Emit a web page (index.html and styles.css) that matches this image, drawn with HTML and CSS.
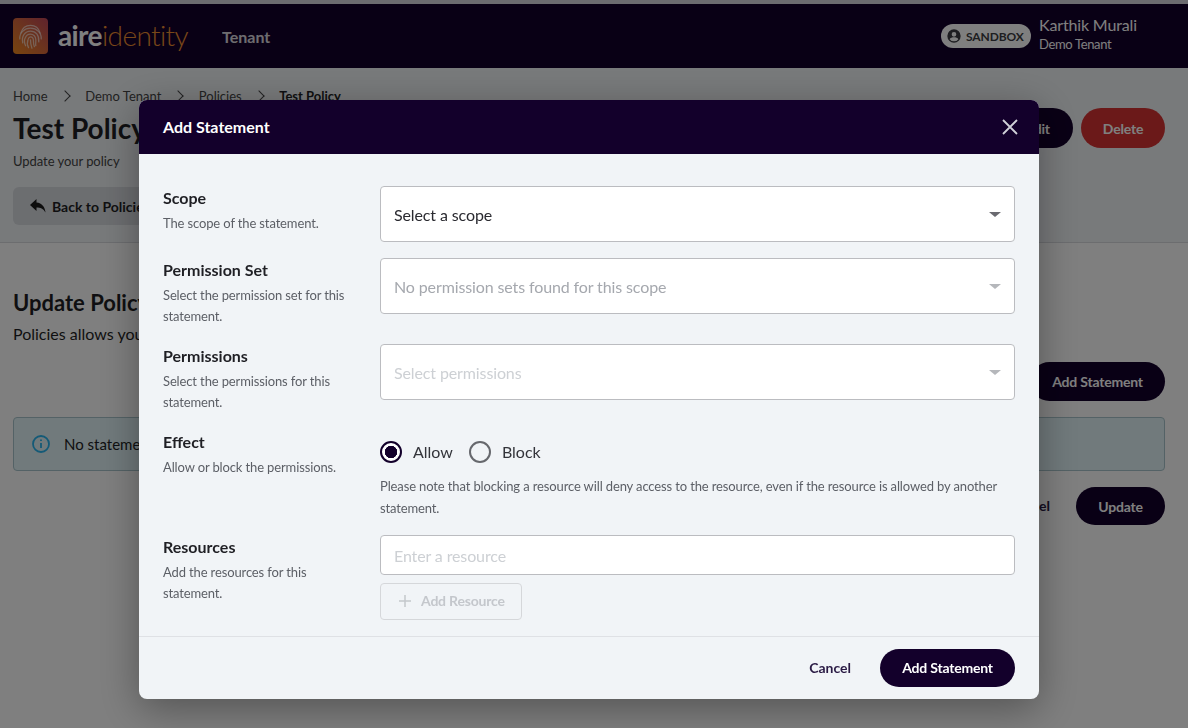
FILE: index.html
```html
<!DOCTYPE html>
<html lang="en">
<head>
    <meta charset="UTF-8">
    <title>Test Policy</title>
    <link rel="stylesheet" href="styles.css">
</head>
<body>
    <div class="top-strip"></div>
    <header class="app-header">
        <div class="logo">
            <span class="logo-mark">
                <svg width="36" height="36" viewBox="0 0 36 36" fill="none" stroke="#fff" stroke-opacity="0.6" stroke-width="1.3" stroke-linecap="round">
                    <path d="M8 15c1.500-5 5.500-8 10-8s8.500 3 10 8"/>
                    <path d="M7 21c-.5-6 4.500-11 11-11s11.500 5 11 11"/>
                    <path d="M10 25c-1.500-7 2.500-12 8-12s9 4 8.500 11"/>
                    <path d="M13 28c-1.500-3-1.500-6-.5-8 1-2.500 3-4 5.500-4s5.500 2 5.500 6-.5 4.500 0 6"/>
                    <path d="M16 30c-1.500-3-1.500-6-.5-8.500.5-1.500 1.500-2.500 2.500-2.500 2 0 3 1.500 3 4s0 4 1 6"/>
                    <path d="M18 22c0 3 .5 6 1.500 8.500"/>
                </svg>
            </span>
            <span class="logo-text"><b>aire</b>identity</span>
        </div>
        <nav class="top-nav">Tenant</nav>
        <div class="header-right">
            <span class="env-pill">
                <svg width="16" height="16" viewBox="0 0 24 24" fill="#3c3c42"><path d="M12 2a10 10 0 1 0 0 20 10 10 0 0 0 0-20zm0 4a3.500 3.500 0 1 1 0 7 3.500 3.500 0 0 1 0-7zm0 14a8 8 0 0 1-6.500-3.300c.8-1.700 4-2.700 6.500-2.700s5.700 1 6.500 2.700A8 8 0 0 1 12 20z"/></svg>
                SANDBOX
            </span>
            <div class="user-info">
                <div class="user-name">Karthik Murali</div>
                <div class="user-tenant">Demo Tenant</div>
            </div>
        </div>
    </header>

    <section class="page-head">
        <div class="breadcrumbs">
            <span>Home</span><i class="crumb-sep"></i>
            <span>Demo Tenant</span><i class="crumb-sep"></i>
            <span>Policies</span><i class="crumb-sep"></i>
            <strong>Test Policy</strong>
        </div>
        <div class="title-row">
            <div>
                <h1>Test Policy</h1>
                <p class="subtitle">Update your policy</p>
            </div>
            <div class="title-actions">
                <button class="btn btn-dark btn-edit">Edit</button>
                <button class="btn btn-red">Delete</button>
            </div>
        </div>
        <button class="btn-back">
            <svg width="18" height="16" viewBox="0 0 18 16" fill="#1a1a1a"><path d="M7.500 1 1 7l6.500 6V9.500c4 0 6.800 1 9 5-.5-5.500-3.500-9.500-9-10z"/></svg>
            Back to Policies
        </button>
    </section>

    <main class="page-body">
        <h2>Update Policy</h2>
        <p class="lead">Policies allows you to manage access to resources.</p>
        <div class="statement-bar">
            <button class="btn btn-dark">Add Statement</button>
        </div>
        <div class="alert">
            <svg width="20" height="20" viewBox="0 0 20 20" fill="none" stroke="#28b4ee" stroke-width="1.800"><circle cx="10" cy="10" r="8"/><path d="M10 9v5M10 5.500v1.500"/></svg>
            No statements have been added yet.
        </div>
        <div class="form-actions">
            <button class="btn-link">Cancel</button>
            <button class="btn btn-dark">Update</button>
        </div>
    </main>

    <div class="overlay">
        <div class="modal">
            <div class="modal-header">
                <span>Add Statement</span>
                <svg class="modal-close" width="16" height="16" viewBox="0 0 16 16" stroke="#d0d0d8" stroke-width="1.800"><path d="M1 1l14 14M15 1 1 15"/></svg>
            </div>
            <div class="modal-body">
                <div class="form-row">
                    <div class="field-label">
                        <h3>Scope</h3>
                        <p>The scope of the statement.</p>
                    </div>
                    <div class="select">
                        <span>Select a scope</span>
                        <i class="caret"></i>
                    </div>
                </div>
                <div class="form-row">
                    <div class="field-label">
                        <h3>Permission Set</h3>
                        <p>Select the permission set for this statement.</p>
                    </div>
                    <div class="select is-empty">
                        <span>No permission sets found for this scope</span>
                        <i class="caret"></i>
                    </div>
                </div>
                <div class="form-row">
                    <div class="field-label">
                        <h3>Permissions</h3>
                        <p>Select the permissions for this statement.</p>
                    </div>
                    <div class="select is-disabled">
                        <span>Select permissions</span>
                        <i class="caret"></i>
                    </div>
                </div>
                <div class="form-row">
                    <div class="field-label">
                        <h3>Effect</h3>
                        <p>Allow or block the permissions.</p>
                    </div>
                    <div>
                        <div class="radio-group">
                            <span class="radio is-checked"></span><span class="radio-text">Allow</span>
                            <span class="radio"></span><span class="radio-text">Block</span>
                        </div>
                        <p class="note">Please note that blocking a resource will deny access to the resource, even if the resource is allowed by another statement.</p>
                    </div>
                </div>
                <div class="form-row">
                    <div class="field-label">
                        <h3>Resources</h3>
                        <p>Add the resources for this statement.</p>
                    </div>
                    <div>
                        <input class="text-input" type="text" placeholder="Enter a resource">
                        <button class="btn-add" disabled>
                            <svg width="12" height="12" viewBox="0 0 12 12" stroke="#c4c7cc" stroke-width="1.500"><path d="M6 0v12M0 6h12"/></svg>
                            Add Resource
                        </button>
                    </div>
                </div>
            </div>
            <div class="modal-footer">
                <button class="btn-link">Cancel</button>
                <button class="btn btn-primary">Add Statement</button>
            </div>
        </div>
    </div>
</body>
</html>
```

FILE: styles.css
```css
* {
    box-sizing: border-box;
}

html, body {
    height: 100%;
}

body {
    margin: 0;
    font-family: 'Lato', sans-serif;
    color: #1f1f24;
    background: #fff;
    overflow: hidden;
}

button {
    font-family: inherit;
}

.top-strip {
    height: 4px;
    background: #d8d8e0;
}

/* header */
.app-header {
    height: 64px;
    padding: 0 24px 0 13px;
    display: flex;
    align-items: center;
    background: #13002b;
}

.logo {
    display: flex;
    align-items: center;
    gap: 10px;
}

.logo-mark {
    width: 35px;
    height: 36px;
    border-radius: 4px;
    background: linear-gradient(45deg, #f08a1e, #c0465a);
    display: flex;
}

.logo-text {
    padding-bottom: 3px;
    font-size: 28px;
    font-weight: 300;
    letter-spacing: -0.6px;
    color: #f09030;
}

.logo-text b {
    font-weight: 700;
    color: #fff;
}

.top-nav {
    margin-left: 34px;
    font-size: 16px;
    font-weight: 700;
    color: #fff;
    opacity: 0.85;
}

.header-right {
    margin-left: auto;
    display: flex;
    align-items: center;
    gap: 8px;
}

.env-pill {
    width: 90px;
    height: 24px;
    padding-left: 5px;
    border-radius: 12px;
    background: #fff;
    color: #3c3c42;
    font-size: 12px;
    font-weight: 700;
    letter-spacing: -0.1px;
    display: flex;
    align-items: center;
    gap: 4px;
}

.user-info {
    width: 125px;
    margin-top: -4px;
    color: #fff;
}

.user-name {
    font-size: 16px;
    line-height: 20px;
    letter-spacing: -0.15px;
}

.user-tenant {
    font-size: 13px;
    line-height: 18px;
    letter-spacing: -0.35px;
}

/* page title area */
.page-head {
    height: 175px;
    padding: 18px 23px 0 13px;
    background: #f1f4f7;
    border-bottom: 1px solid #d8dadf;
}

.breadcrumbs {
    height: 20px;
    display: flex;
    align-items: center;
    font-size: 13px;
    color: #444;
}

.breadcrumbs strong {
    font-weight: 700;
    color: #1f1f24;
}

.crumb-sep {
    width: 8px;
    height: 8px;
    margin: 0 16.500px 0 13px;
    border-top: 1.500px solid #444;
    border-right: 1.500px solid #444;
    transform: rotate(45deg);
}

.title-row {
    display: flex;
    justify-content: space-between;
    align-items: flex-start;
}

h1 {
    margin: 4px 0 0;
    font-size: 28px;
    line-height: 36px;
    font-weight: 700;
}

.subtitle {
    margin: 5px 0 0;
    font-size: 13px;
    line-height: 20px;
    letter-spacing: -0.05px;
    color: #444;
}

.title-actions {
    margin-top: 2px;
    display: flex;
    gap: 8px;
}

.btn {
    height: 38px;
    padding: 0 22px;
    border: 0;
    border-radius: 20px;
    font-size: 14px;
    font-weight: 700;
    letter-spacing: -0.2px;
    color: #fff;
}

.btn-dark {
    background: #13002b;
}

.btn-primary {
    background: #13002b;
    width: 135px;
    padding: 0 0 2px;
}

.btn-red {
    height: 40px;
    width: 84px;
    padding: 0;
    background: #d63333;
}

.btn-edit {
    height: 40px;
    width: 70px;
}

.btn-back {
    margin-top: 16px;
    width: 150px;
    height: 38px;
    padding: 0 0 0 16px;
    border: 0;
    border-radius: 6px;
    background: #d9dce1;
    color: #1f1f24;
    font-size: 14px;
    font-weight: 700;
    display: flex;
    align-items: center;
    gap: 5px;
    white-space: nowrap;
}

/* page body */
.page-body {
    padding: 44px 23px 0 13px;
}

h2 {
    margin: 0;
    font-size: 22px;
    line-height: 32px;
    font-weight: 700;
}

.lead {
    margin: 3px 0 0;
    font-size: 16px;
    line-height: 24px;
}

.statement-bar {
    margin-top: 16px;
    display: flex;
    justify-content: flex-end;
}

.statement-bar .btn {
    height: 39px;
    width: 135px;
    padding: 0;
}

.alert {
    margin-top: 16px;
    height: 54px;
    padding: 0 0 1px 17px;
    border: 1px solid #a9c5cc;
    border-radius: 4px;
    background: #e2f4f8;
    display: flex;
    align-items: center;
    gap: 13px;
    font-size: 15px;
}

.form-actions {
    margin-top: 16px;
    display: flex;
    justify-content: flex-end;
    align-items: center;
    gap: 26px;
}

.form-actions .btn {
    width: 89px;
    padding: 0;
}

.btn-link {
    padding: 0 0 2px;
    border: 0;
    background: none;
    font-size: 14px;
    font-weight: 700;
    color: #2a1a44;
}

/* modal */
.overlay {
    position: fixed;
    top: 0;
    left: 0;
    right: 0;
    bottom: 0;
    padding: 100px 10px 0 0;
    display: flex;
    justify-content: center;
    align-items: flex-start;
    background: rgba(0, 0, 0, 0.5);
}

.modal {
    width: 900px;
    border-radius: 8px;
    overflow: hidden;
    background: #f1f4f7;
    box-shadow: 0 10px 40px rgba(0, 0, 0, 0.35);
}

.modal-header {
    height: 54px;
    padding: 0 21px 2px 24px;
    display: flex;
    align-items: center;
    justify-content: space-between;
    background: #13002b;
    color: #fff;
    font-size: 16px;
    font-weight: 700;
}

.modal-close {
    margin-top: 2px;
}

.modal-body {
    padding: 32px 24px 16px;
    display: flex;
    flex-direction: column;
    gap: 16px;
}

.form-row {
    display: grid;
    grid-template-columns: 217px 635px;
    align-items: start;
}

.field-label {
    padding: 0 20px 1px 0;
}

.field-label h3 {
    margin: 0;
    font-size: 16px;
    line-height: 24px;
    font-weight: 700;
    color: #1f1f24;
}

.field-label p {
    margin: 3px 0 0;
    font-size: 13px;
    line-height: 21px;
    letter-spacing: -0.13px;
    color: #5c5f66;
}

.select {
    height: 56px;
    padding: 1px 13px 0;
    border: 1px solid #bbbcc0;
    border-radius: 4px;
    background: #fff;
    display: flex;
    align-items: center;
    justify-content: space-between;
    font-size: 16px;
    letter-spacing: -0.12px;
    color: #2a2a30;
}

.select.is-empty {
    color: #a5a8ae;
}

.select.is-disabled {
    color: #cdd0d4;
}

.caret {
    width: 0;
    height: 0;
    border-left: 6px solid transparent;
    border-right: 6px solid transparent;
    border-top: 5px solid #6a6a70;
}

.is-empty .caret,
.is-disabled .caret {
    border-top-color: #b5b7bb;
}

.radio-group {
    height: 44px;
    padding-bottom: 1px;
    display: flex;
    align-items: center;
}

.radio {
    width: 22px;
    height: 22px;
    border: 2px solid #66686d;
    border-radius: 50%;
}

.radio.is-checked {
    border-color: #13002b;
    background: radial-gradient(circle, #13002b 0 6px, #fff 6.500px);
}

.radio-text {
    margin: 0 16px 0 11px;
    font-size: 16px;
    color: #33343a;
}

.note {
    margin: 1px 0 0;
    font-size: 13px;
    line-height: 22px;
    letter-spacing: -0.13px;
    color: #5c5f66;
}

.text-input {
    display: block;
    width: 100%;
    height: 40px;
    padding: 1px 13px 0;
    border: 1px solid #bbbcc0;
    border-radius: 4px;
    background: #fff;
    font-family: inherit;
    font-size: 16px;
    letter-spacing: -0.12px;
}

.text-input::placeholder {
    color: #cdd0d4;
    opacity: 1;
}

.btn-add {
    margin-top: 8px;
    width: 142px;
    height: 37px;
    padding: 0 0 2px 18px;
    border: 1px solid #d5d7da;
    border-radius: 4px;
    background: none;
    display: flex;
    align-items: center;
    gap: 10px;
    font-size: 14px;
    font-weight: 700;
    letter-spacing: -0.2px;
    color: #c4c7cc;
}

.modal-footer {
    height: 63px;
    padding: 0 24px;
    border-top: 1px solid #dfe1e5;
    display: flex;
    justify-content: flex-end;
    align-items: center;
    gap: 29px;
}
```
